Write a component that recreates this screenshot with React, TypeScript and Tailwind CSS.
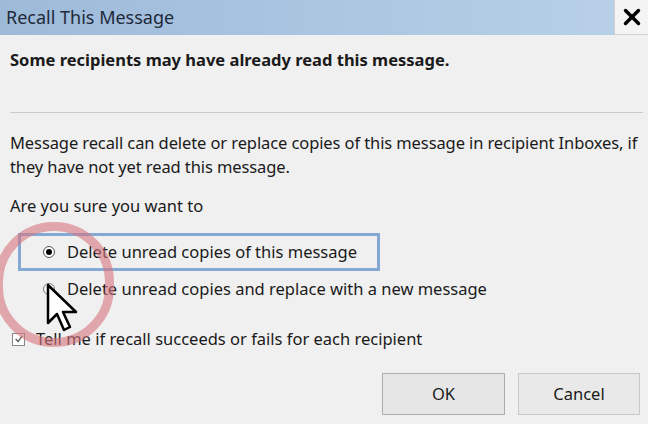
import { X } from 'lucide-react';

export default function App() {
  return (
    <div
      className="relative w-[648px] h-[424px] overflow-hidden bg-[#f0f0f0] text-[#1a1a1a]"
      style={{ fontFamily: '"Noto Sans", "Open Sans", sans-serif' }}
    >
      {/* Title bar */}
      <div className="flex h-[35px] items-stretch bg-gradient-to-r from-[#9dbad9] to-[#b9d1e9]">
        <div className="flex-1 pl-[6px] pt-[5px] text-[18px] leading-[24px] text-[#1e2a3a]">Recall This Message</div>
        <div className="flex w-[34px] items-center justify-center bg-[#f4f4f4] border-l border-b border-[#d0d0d0]">
          <X className="w-[26px] h-[26px] text-black" strokeWidth={3.2} />
        </div>
      </div>

      {/* Body */}
      <div className="px-[10px] text-[16.5px]">
        <p className="mt-[13px] font-bold leading-[24px]">Some recipients may have already read this message.</p>
        <div className="mt-[40px] h-px bg-[#cacaca] mr-[-5px]" />
        <p className="mt-[18px] leading-[24px] tracking-[-0.1px]">
          Message recall can delete or replace copies of this message in recipient Inboxes, if they have not yet read this
          message.
        </p>
        <p className="mt-[15px] leading-[24px]">Are you sure you want to</p>

        <div className="mt-[15px] ml-[8px] w-[362px] h-[38px] flex items-center gap-[12px] pl-[22px] border-[3px] border-[#86a9d4]">
          <span className="flex w-[12px] h-[12px] items-center justify-center rounded-full border border-[#555] bg-white">
            <span className="w-[6px] h-[6px] rounded-full bg-black" />
          </span>
          <span className="leading-[24px]">Delete unread copies of this message</span>
        </div>

        <div className="mt-[6px] ml-[8px] flex items-center gap-[12px] pl-[25px]">
          <span className="w-[12px] h-[12px] rounded-full border border-[#777] bg-white" />
          <span className="leading-[24px]">Delete unread copies and replace with a new message</span>
        </div>

        <div className="mt-[26px] flex items-center gap-[11px] pl-[2px]">
          <span className="flex w-[13px] h-[13px] items-center justify-center border border-[#888] bg-white">
            <svg viewBox="0 0 12 12" className="w-[10px] h-[10px]">
              <path d="M2 6 L5 9 L10 2" fill="none" stroke="#555" strokeWidth="1.5" />
            </svg>
          </span>
          <span className="leading-[24px]">Tell me if recall succeeds or fails for each recipient</span>
        </div>

        <div className="mt-[22px] flex justify-end gap-[13px] mr-[-2px]">
          <button className="w-[123px] h-[42px] border border-[#adadad] bg-[#e6e6e6]">OK</button>
          <button className="w-[122px] h-[42px] border border-[#c8c8c8] bg-[#e9e9e9]">Cancel</button>
        </div>
      </div>

      {/* Red annotation circle */}
      <div className="absolute left-[-6px] top-[222px] w-[120px] h-[125px] rounded-full border-[9px] border-[#d6747f]/60" />

      {/* Cursor */}
      <svg className="absolute left-[46px] top-[283px]" width="36" height="52" viewBox="0 0 36 52">
        <path d="M2 2 L2 40 L11 31 L18 47 L24 44 L17 29 L30 29 Z" fill="white" stroke="black" strokeWidth="2.5" strokeLinejoin="round" />
      </svg>
    </div>
  );
}
